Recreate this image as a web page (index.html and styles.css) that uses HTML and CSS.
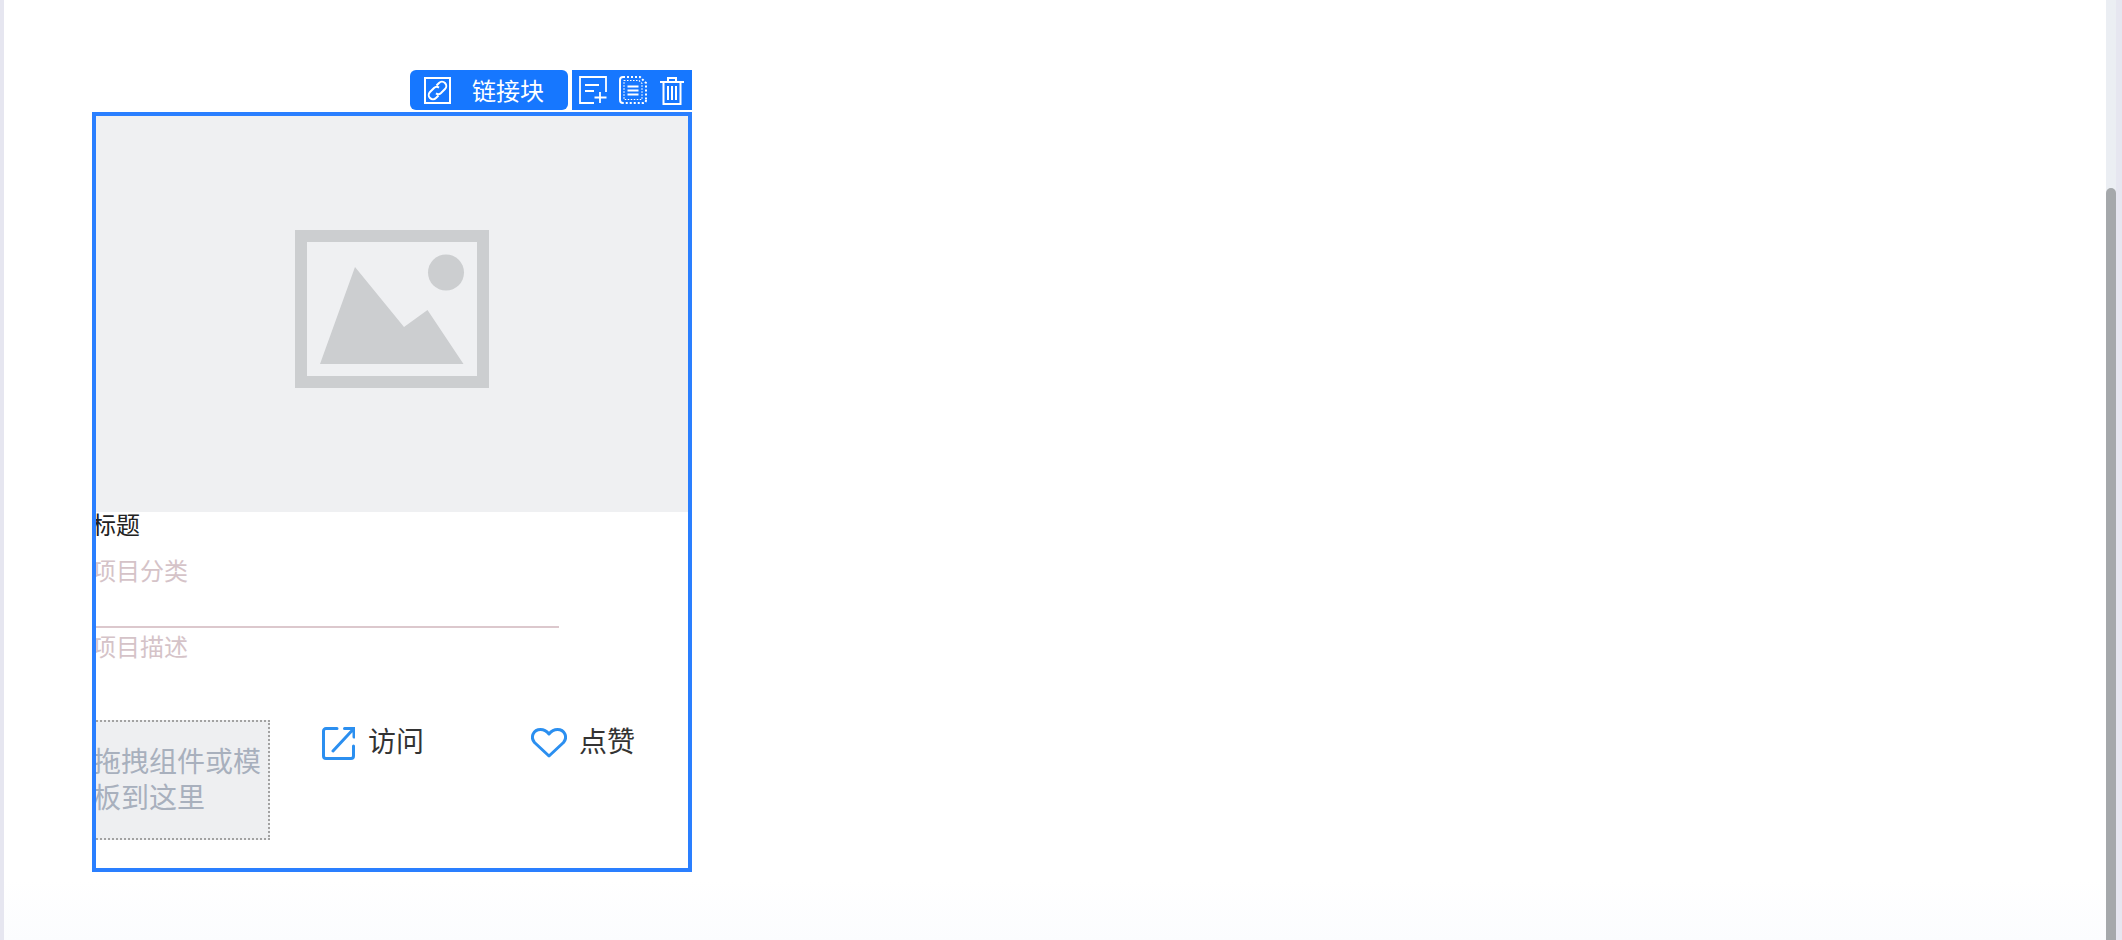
FILE: index.html
```html
<!DOCTYPE html>
<html lang="zh">
<head>
<meta charset="utf-8">
<title>链接块</title>
<link rel="stylesheet" href="styles.css">
</head>
<body>
<div class="stripe"></div>
<main class="canvas">
  <div class="block">
    <div class="toolbar">
      <div class="tag">
        <svg class="tag-icon" viewBox="0 0 27 27" fill="none" stroke="#fff" stroke-width="2">
          <rect x="1" y="1" width="25" height="25"/>
          <g stroke-width="2">
            <path d="M12.500 8.500l2.500-2.500a4 4 0 0 1 6 6l-4 4a4 4 0 0 1-5 .4"/>
            <path d="M14.500 18.500l-2.500 2.500a4 4 0 0 1-6-6l4-4a4 4 0 0 1 5-.4"/>
          </g>
        </svg>
        <span class="tag-label">链接块</span>
      </div>
      <div class="actions">
        <svg class="action" viewBox="0 0 28 28" fill="none" stroke="#fff" stroke-width="1.800">
          <path d="M15 27H1V1h26v15"/>
          <path d="M6 9h14M6 15h9M21 16v11M15.500 21.500h12"/>
        </svg>
        <svg class="action" viewBox="0 0 28 28" fill="none" stroke="#fff" stroke-width="2">
          <path d="M4 1h17l6 6v17M27 24q0 3-3 3H4" stroke-dasharray="2 2"/>
          <path d="M4 27q-3 0-3-3V4q0-3 3-3"/>
          <path d="M5 4.500h15l3 3v16H5z" stroke-width="1.200" stroke-dasharray="1.500 1.500"/>
          <path d="M8.500 10.500h11M8.500 14.500h11M8.500 18.500h11"/>
        </svg>
        <svg class="action trash" viewBox="0 0 24 29" fill="none" stroke="#fff" stroke-width="2">
          <path d="M0 6h24M8 6V2h8v4M3.500 6v22h17V6M8 10v14M12 10v14M16 10v14"/>
        </svg>
      </div>
    </div>
    <div class="card">
      <div class="cover">
        <svg class="cover-icon" viewBox="0 0 194 158">
          <path fill="#ccced0" fill-rule="evenodd" d="M0 0h194v158H0zM12 12v134h170V12z"/>
          <circle fill="#ccced0" cx="151" cy="42.500" r="18"/>
          <path fill="#ccced0" d="M60 37l49 60 23.500-17 36 54H25z"/>
        </svg>
      </div>
      <div class="content">
        <h3 class="title">标题</h3>
        <p class="category">项目分类</p>
        <hr class="rule">
        <p class="desc">项目描述</p>
        <div class="footer">
          <div class="dropzone">拖拽组件或模板到这里</div>
          <div class="link-action visit">
            <svg class="visit-icon" viewBox="0 0 33 33" fill="none" stroke="#2b8ff0" stroke-width="3" stroke-linecap="round">
              <path d="M15 1.500H4A2.500 2.500 0 0 0 1.500 4v25A2.500 2.500 0 0 0 4 31.500h25a2.500 2.500 0 0 0 2.500-2.500V19"/>
              <path d="M11 24L31 2.500M22.500 1.500h9.500V10"/>
            </svg>
            <span class="action-label">访问</span>
          </div>
          <div class="link-action like">
            <svg class="heart-icon" viewBox="0 0 36 30" fill="none" stroke="#2b8ff0" stroke-width="3" stroke-linejoin="round">
              <path d="M18 28L3.500 14.500C-1 9 2.500 1.500 9.500 1.500C13 1.500 16 3.500 18 6C20 3.500 23 1.500 26.500 1.500C33.500 1.500 37 9 32.500 14.500z"/>
            </svg>
            <span class="action-label">点赞</span>
          </div>
        </div>
      </div>
    </div>
  </div>
</main>
<aside class="scrollbar"><div class="thumb"></div></aside>
</body>
</html>
```
FILE: styles.css
```css
* { box-sizing: border-box; }
html, body { margin: 0; height: 100%; overflow: hidden; }
body {
  display: flex;
  font-family: "Noto Sans CJK SC", "Noto Sans", sans-serif;
  background: #fff;
  color: #333;
}
.stripe { width: 4px; background: #e6e6f0; flex: none; }
.canvas {
  flex: 1;
  padding: 70px 0 0 88px;
  background: linear-gradient(#fff 880px, #fbfcfe);
}
.block { width: 600px; }
.toolbar { display: flex; height: 40px; margin-bottom: 2px; justify-content: flex-end; gap: 4px; }
.tag {
  width: 158px;
  background: #1677ff;
  border-radius: 6px;
  display: flex;
  align-items: center;
  color: #fff;
  font-size: 24px;
  padding-left: 14px;
}
.tag-icon { width: 27px; height: 27px; flex: none; }
.tag-label { margin-left: 21px; line-height: 40px; }
.actions {
  width: 120px;
  background: #1677ff;
  display: flex;
  align-items: center;
  padding-left: 7px;
  gap: 12px;
}
.action { width: 28px; height: 28px; flex: none; }
.action.trash { width: 24px; height: 29px; margin-left: 1px; }
.card {
  width: 600px;
  height: 760px;
  border: 4px solid #2a7fff;
  overflow: hidden;
  background: #fff;
}
.cover {
  height: 396px;
  background: #eff0f2;
  display: flex;
  align-items: center;
  justify-content: center;
  padding-bottom: 10px;
}
.cover-icon { width: 194px; height: 158px; }
.content { margin-left: -4px; }
.title { margin: 0; font-size: 24px; font-weight: 400; line-height: 24px; color: #222; }
.category, .desc { margin: 0; font-size: 24px; line-height: 32px; color: #d5c3c8; }
.category { margin-top: 18px; }
.rule { width: 467px; height: 2px; margin: 40px 0 0; border: 0; background: #dcc8cd; }
.desc { margin-top: 2px; }
.footer { display: flex; margin-top: 58px; align-items: flex-start; }
.dropzone {
  width: 178px;
  height: 120px;
  border: 2px dotted #a2a2a2;
  border-left: 0;
  background: #eeeff1;
  color: #a8b0bd;
  font-size: 28px;
  line-height: 36px;
  padding: 20px 0 0 1px;
}
.link-action { display: flex; align-items: flex-start; font-size: 28px; line-height: 32px; margin-top: 7px; }
.action-label { margin-top: -3px; }
.visit { margin-left: 52px; gap: 13px; }
.like { margin-left: 107px; gap: 12px; }
.visit-icon { width: 33px; height: 33px; }
.heart-icon { width: 36px; height: 30px; margin-top: 1px; }
.scrollbar {
  width: 16px;
  flex: none;
  background: #ebeef3;
  border-right: 6px solid #e6e6f0;
  padding-top: 188px;
}
.thumb { height: 100%; background: #a5a8ab; border-radius: 6px 6px 0 0; }
```
